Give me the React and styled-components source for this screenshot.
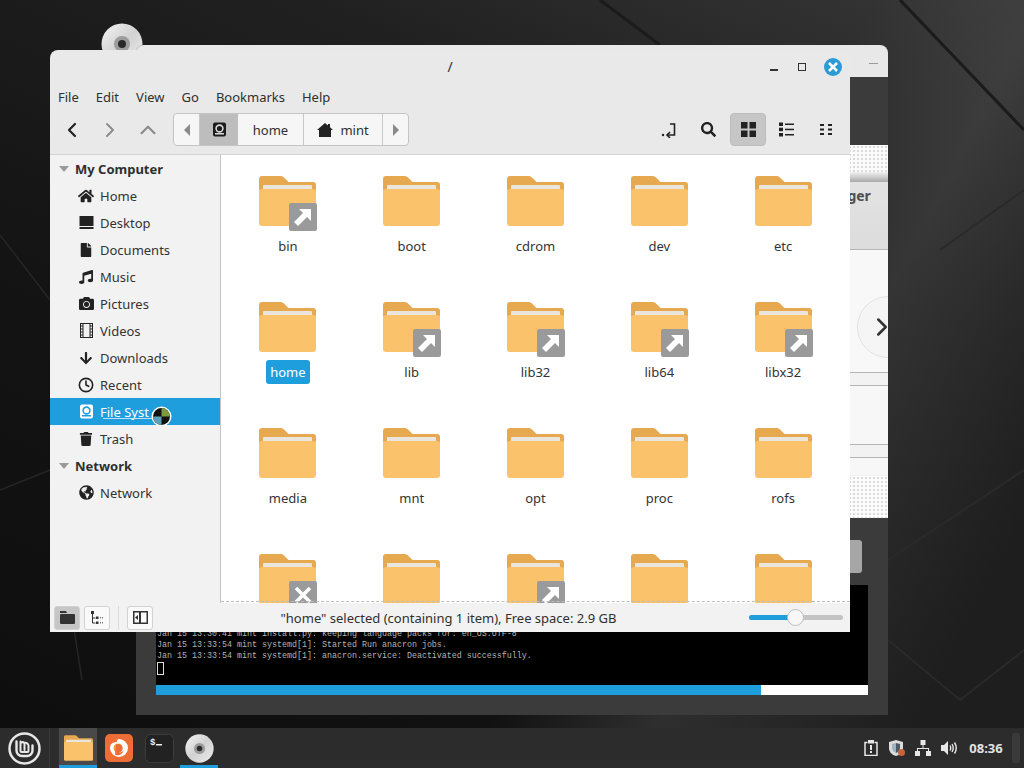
import React from "react";
import styled, { createGlobalStyle } from "styled-components";
import {
  FaHome,
  FaMusic,
  FaCamera,
  FaTrash,
  FaGlobeAmericas,
  FaFile,
  FaArrowDown,
  FaSearch,
} from "react-icons/fa";
import { FiChevronLeft, FiChevronRight, FiChevronUp, FiClock } from "react-icons/fi";

const GlobalStyle = createGlobalStyle`
  html, body { margin: 0; padding: 0; background: #141414; }
  body { font-family: "Noto Sans", "Open Sans", sans-serif; overflow: hidden; }
  * { box-sizing: border-box; }
`;

const Screen = styled.div`
  width: 1024px;
  height: 768px;
  display: flex;
  flex-direction: column;
  overflow: hidden;
`;

const Desktop = styled.div`
  position: relative;
  flex: 1;
  overflow: hidden;
  background:
    linear-gradient(118deg, transparent 62%, rgba(70, 70, 70, 0.55) 74%, #1e1e1e 92%),
    linear-gradient(205deg, #383838 0%, #202020 28%, #141414 60%, #0e0e0e 100%);
`;

const Wallpaper = styled.svg`
  position: absolute;
  inset: 0;
`;

const DesktopDisc = styled.div`
  position: absolute;
  left: 101px;
  top: 23px;
`;

/* window at the back */
const BackWindow = styled.div`
  position: absolute;
  left: 136px;
  top: 45px;
  width: 752px;
  height: 670px;
  display: flex;
  flex-direction: column;
  background: #3b3b3b;
  border-radius: 8px 8px 0 0;
  overflow: hidden;
`;

const BackTitle = styled.div`
  height: 32px;
  flex: none;
  display: flex;
  justify-content: flex-end;
  background: #e8e8e8;
  padding: 18px 10px 0 0;
`;

const BackMin = styled.div`
  width: 9px;
  height: 1px;
  background: #9a9a9a;
`;

const BackGap = styled.div`
  height: ${(p) => p.$h}px;
  flex: none;
`;

const Dotted = styled.div`
  height: ${(p) => p.$h}px;
  flex: none;
  background-color: ${(p) => p.$bg || "#fbfbfb"};
  background-image: radial-gradient(#d8d8d8 0.7px, transparent 0.8px);
  background-size: 4px 4px;
`;

const FadeStrip = styled.div`
  height: 10px;
  flex: none;
  background: linear-gradient(#f2f2f2, #a9a9a9);
`;

const HeadingStrip = styled.div`
  height: 68px;
  flex: none;
  display: flex;
  align-items: flex-start;
  padding: 4px 0 0 606px;
  overflow: hidden;
  white-space: nowrap;
  font-size: 14px;
  font-weight: 700;
  color: #4f4f4f;
  background: linear-gradient(#e3e3e3, #dcdcdc);
  border-bottom: 1px solid #b5b5b5;
`;

const PagerStrip = styled.div`
  position: relative;
  height: 123px;
  flex: none;
  background: #f8f8f8;
  border-bottom: 1px solid #b5b5b5;
`;

const PagerButton = styled.div`
  position: absolute;
  left: 721px;
  top: 46px;
  width: 62px;
  height: 62px;
  border-radius: 50%;
  background: #f5f5f5;
  border: 1px solid #e2e2e2;
  display: flex;
  align-items: center;
  padding-left: 9px;
  color: #333;
`;

const ListRow = styled.div`
  height: ${(p) => p.$h}px;
  flex: none;
  background: ${(p) => p.$bg || "#f7f7f7"};
  border-bottom: 1px solid ${(p) => p.$line || "#b5b5b5"};
`;

const BackLower = styled.div`
  flex: 1;
  display: flex;
  flex-direction: column;
  padding: 22px 20px 20px;
`;

const BackButtonRow = styled.div`
  height: 33px;
  display: flex;
  justify-content: flex-end;
  padding-right: 6px;
  margin-bottom: 12px;
`;

const BackButton = styled.div`
  width: 12px;
  background: #a6a6a6;
  border-radius: 0 3px 3px 0;
  margin-left: auto;
`;

const Terminal = styled.div`
  height: 100px;
  display: flex;
  flex-direction: column;
  justify-content: flex-end;
  padding: 0 0 10px 1px;
  background: #000;
  color: #b4b4b4;
  font-family: "Liberation Mono", monospace;
  font-size: 8.33px;
  line-height: 11px;
  white-space: pre;
`;

const TermCursor = styled.div`
  width: 7px;
  height: 13px;
  border: 1px solid #ddd;
`;

const Progress = styled.div`
  height: 10px;
  background: #fff;
`;

const ProgressFill = styled.div`
  height: 100%;
  background: #1f9ede;
`;

/* file manager */
const Nemo = styled.div`
  position: absolute;
  left: 50px;
  top: 50px;
  width: 800px;
  height: 582px;
  display: flex;
  flex-direction: column;
  background: #e9e9e9;
  border-radius: 8px 8px 0 0;
  overflow: hidden;
  color: #2f2f2f;
  font-size: 13px;
`;

const TitleBar = styled.div`
  height: 33px;
  flex: none;
  display: grid;
  grid-template-columns: 1fr auto 1fr;
  align-items: center;
  font-size: 14px;
`;

const TitleControls = styled.div`
  justify-self: end;
  display: flex;
  align-items: center;
  padding-right: 8px;
`;

const MinButton = styled.div`
  width: 8px;
  height: 2px;
  background: #333;
  margin: 6px 20px 0 0;
`;

const MaxButton = styled.div`
  width: 8px;
  height: 8px;
  border: 1.5px solid #333;
  margin-right: 18px;
`;

const CloseButton = styled.div`
  width: 18px;
  height: 18px;
  border-radius: 50%;
  background: #2b9bd6;
  display: flex;
  align-items: center;
  justify-content: center;
`;

const MenuBar = styled.div`
  height: 27px;
  flex: none;
  display: flex;
  align-items: center;
  gap: 17px;
  padding-left: 8px;
`;

const Toolbar = styled.div`
  height: 44px;
  flex: none;
  display: flex;
  align-items: center;
  padding: 0 6px 5px 0;
  border-bottom: 0;
`;

const NavButton = styled.div`
  width: 38px;
  height: 33px;
  display: flex;
  align-items: center;
  justify-content: center;
  color: ${(p) => (p.$dim ? "#8c8c8c" : "#222")};
`;

const NavGroup = styled.div`
  display: flex;
  padding-left: 3px;
  margin-right: 6px;
`;

const PathBar = styled.div`
  display: flex;
  height: 33px;
  background: #f6f6f6;
  border: 1px solid #c4c4c4;
  border-radius: 4px;
  overflow: hidden;
`;

const PathSegment = styled.div`
  width: ${(p) => p.$w}px;
  display: flex;
  align-items: center;
  justify-content: center;
  gap: 7px;
  background: ${(p) => (p.$active ? "#bdbdbd" : "transparent")};
  border-right: ${(p) => (p.$line ? "1px solid #c9c9c9" : "0")};
`;

const ToolIcons = styled.div`
  margin-left: auto;
  display: flex;
  align-items: center;
`;

const ToolButton = styled.div`
  width: ${(p) => p.$w || 36}px;
  height: 33px;
  display: flex;
  align-items: center;
  justify-content: center;
  border-radius: 4px;
  background: ${(p) => (p.$active ? "#c6c6c6" : "transparent")};
  border: ${(p) => (p.$active ? "1px solid #bcbcbc" : "0")};
  margin-left: ${(p) => p.$ml || 0}px;
`;

const Body = styled.div`
  flex: 1;
  min-height: 0;
  display: flex;
  border-top: 1px solid #d3d3d3;
`;

const Sidebar = styled.div`
  width: 171px;
  flex: none;
  background: #f2f2f2;
  border-right: 1px solid #c4c4c4;
  padding-top: 0;
`;

const SectionRow = styled.div`
  height: 27px;
  display: flex;
  align-items: center;
  padding-left: 9px;
  font-weight: 700;
  gap: 6px;
`;

const Triangle = styled.div`
  width: 0;
  height: 0;
  border-left: 5.5px solid transparent;
  border-right: 5.5px solid transparent;
  border-top: 6px solid #9a9a9a;
`;

const SideRow = styled.div`
  position: relative;
  height: 27px;
  display: flex;
  align-items: center;
  padding-left: 28px;
  background: ${(p) => (p.$active ? "#1f9ede" : "transparent")};
  color: ${(p) => (p.$active ? "#fff" : "#333")};
`;

const SideIcon = styled.span`
  width: 16px;
  height: 16px;
  margin-right: 6px;
  display: flex;
  align-items: center;
  justify-content: center;
  color: ${(p) => (p.$active ? "#fff" : "#222")};
`;

const SideUnderline = styled.div`
  position: absolute;
  left: 53px;
  top: 20px;
  width: 50px;
  height: 1px;
  background: #bfe2f5;
`;

const BusyCursor = styled.div`
  position: absolute;
  left: 101px;
  top: 8px;
  width: 21px;
  height: 21px;
`;

const Files = styled.div`
  position: relative;
  flex: 1;
  min-width: 0;
  overflow: hidden;
  background: #fff;
  display: grid;
  grid-template-columns: repeat(5, 123.8px);
  grid-auto-rows: 126px;
  padding: 21px 0 0 5px;
`;

const FileCell = styled.div`
  display: flex;
  flex-direction: column;
  align-items: center;
`;

const FolderWrap = styled.div`
  position: relative;
  width: 57px;
  height: 50px;
  flex: none;
`;

const Emblem = styled.div`
  position: absolute;
  left: 30px;
  top: 27px;
  width: 28px;
  height: 28px;
  border-radius: 2px;
  background: #9a9a9a;
  display: flex;
  align-items: center;
  justify-content: center;
`;

const FileLabel = styled.div`
  margin-top: 8px;
  height: 24px;
  padding: 0 4px;
  display: flex;
  align-items: center;
  border-radius: 3px;
  background: ${(p) => (p.$selected ? "#1f9ede" : "transparent")};
  color: ${(p) => (p.$selected ? "#fff" : "#333")};
`;

const DashLine = styled.div`
  position: absolute;
  left: 0;
  right: 0;
  bottom: 1px;
  border-top: 1px dashed #bdbdbd;
`;

const StatusBar = styled.div`
  height: 29px;
  flex: none;
  display: grid;
  grid-template-columns: 1fr auto 1fr;
  align-items: center;
  padding: 0 7px 0 4px;
  background: #f2f2f2;
`;

const StatusLeft = styled.div`
  display: flex;
  align-items: center;
  gap: 4px;
`;

const StatusButton = styled.div`
  width: 26px;
  height: 24px;
  display: flex;
  align-items: center;
  justify-content: center;
  border: 1px solid #d2d2d2;
  border-radius: 3px;
  background: ${(p) => (p.$active ? "#c6c6c6" : "#fafafa")};
`;

const StatusSep = styled.div`
  width: 1px;
  height: 24px;
  background: #dcdcdc;
  margin: 0 4px;
`;

const StatusText = styled.div`
  font-size: 13px;
`;

const Slider = styled.div`
  position: relative;
  justify-self: end;
  width: 94px;
  height: 5px;
  border-radius: 3px;
  background: #c4c4c4;
`;

const SliderFill = styled.div`
  height: 100%;
  border-radius: 3px 0 0 3px;
  background: #1f9ede;
`;

const SliderThumb = styled.div`
  position: absolute;
  left: 38px;
  top: -6px;
  width: 17px;
  height: 17px;
  border-radius: 50%;
  background: #f7f7f7;
  border: 1px solid #bdbdbd;
`;

/* bottom panel */
const Panel = styled.div`
  height: 40px;
  flex: none;
  display: flex;
  align-items: stretch;
  background: #2c2c2c;
  color: #e4e4e4;
`;

const MenuLogo = styled.div`
  width: 50px;
  display: flex;
  align-items: center;
  justify-content: center;
  padding-left: 0;
  border-right: 1px solid #3a3a3a;
`;

const Launchers = styled.div`
  display: flex;
  margin-left: 9px;
`;

const Launcher = styled.div`
  width: 38px;
  margin-right: ${(p) => p.$mr || 2}px;
  display: flex;
  align-items: center;
  justify-content: center;
  background: ${(p) => (p.$open ? "#494949" : "transparent")};
  box-shadow: ${(p) => (p.$running ? "inset 0 -3px 0 #1f9ede" : "none")};
`;

const Tray = styled.div`
  margin-left: auto;
  display: flex;
  align-items: center;
  padding-right: 4px;
`;

const TrayIcon = styled.div`
  width: 26px;
  display: flex;
  justify-content: center;
`;

const Clock = styled.div`
  width: 48px;
  text-align: center;
  font-size: 13px;
  font-weight: 700;
  color: #e2e2e2;
`;

const TrayEnd = styled.div`
  width: 8px;
  height: 30px;
  margin-left: 2px;
  border-radius: 2px;
  background: #3a3a3a;
`;

const Disc = ({ size }) => (
  <svg width={size} height={size} viewBox="0 0 42 42">
    <defs>
      <linearGradient id="discShade" x1="0" y1="0" x2="1" y2="1">
        <stop offset="0" stopColor="#f4f4f4" />
        <stop offset="0.5" stopColor="#d2d2d2" />
        <stop offset="1" stopColor="#ececec" />
      </linearGradient>
    </defs>
    <circle cx="21" cy="21" r="20.5" fill="url(#discShade)" />
    <circle cx="21" cy="21" r="8" fill="#9c9c9c" />
    <circle cx="21" cy="21" r="4" fill="#2a2a2a" />
  </svg>
);

const Folder = ({ small }) => (
  <svg width={small ? 29 : 57} height={small ? 26 : 50} viewBox="0 0 57 50">
    <path d="M3 0h18c2 0 3 .6 4.500 2l4 4H54a3 3 0 0 1 3 3v12H0V3a3 3 0 0 1 3-3z" fill="#e6a94f" />
    <rect x="4" y="9" width="49" height="10" rx="1" fill="#ebe6dd" />
    <path d="M0 14l3-1h51l3 1v33a3 3 0 0 1-3 3H3a3 3 0 0 1-3-3z" fill="#fbc26c" />
  </svg>
);

const LinkEmblem = () => (
  <svg width="20" height="20" viewBox="0 0 20 20">
    <path d="M6 2h12v12l-4-4-9 9-4-4 9-9z" fill="#fff" />
  </svg>
);

const BrokenEmblem = () => (
  <svg width="18" height="18" viewBox="0 0 18 18">
    <path d="M2 2l14 14M16 2L2 16" stroke="#fff" strokeWidth="3.500" />
  </svg>
);

const DriveIcon = ({ color = "#1c1c1c", size = 15 }) => (
  <svg width={size} height={size} viewBox="0 0 15 15">
    <rect x="1" y="0.500" width="13" height="14" rx="2" fill={color} />
    <rect x="3" y="2.500" width="9" height="10" rx="1" fill="none" stroke={color === "#fff" ? "#1f9ede" : "#e0e0e0"} strokeWidth="0" />
    <circle cx="7.500" cy="6.500" r="3.400" fill="none" stroke={color === "#fff" ? "#1f9ede" : "#d8d8d8"} strokeWidth="1.600" />
    <rect x="3" y="11" width="9" height="1.500" fill={color === "#fff" ? "#1f9ede" : "#d8d8d8"} />
  </svg>
);

const DesktopIcon = () => (
  <svg width="15" height="13" viewBox="0 0 15 13">
    <rect x="0.500" y="0" width="14" height="10" fill="#222" />
    <rect x="0.500" y="11" width="14" height="2" fill="#222" />
  </svg>
);

const VideoIcon = () => (
  <svg width="13" height="15" viewBox="0 0 13 15">
    <rect x="0.500" y="0.500" width="12" height="14" fill="none" stroke="#222" />
    <path d="M3 1v13M10 1v13" stroke="#222" />
    <path d="M0 3h3M0 6h3M0 9h3M0 12h3M10 3h3M10 6h3M10 9h3M10 12h3" stroke="#222" />
  </svg>
);

const PathHome = () => (
  <svg width="16" height="14" viewBox="0 0 16 14">
    <path d="M8 0l3 2.500V1h2v3.200L16 7h-2v7H2V7H0z" fill="#222" />
  </svg>
);

const SideArrow = ({ dir }) => (
  <svg width="8" height="12" viewBox="0 0 8 12">
    <path d={dir === "left" ? "M7 0v12L1 6z" : "M1 0v12l6-6z"} fill="#8a8a8a" />
  </svg>
);

const JumpIcon = () => (
  <svg width="16" height="16" viewBox="0 0 16 16" fill="none" stroke="#222" strokeWidth="1.600">
    <circle cx="2" cy="13" r="1.200" fill="#222" stroke="none" />
    <path d="M9 2h4.500v11H7" />
    <path d="M9 10l-3 3 3 3" />
  </svg>
);

const GridIcon = () => (
  <svg width="15" height="15" viewBox="0 0 15 15" fill="#222">
    <rect width="6.500" height="6.500" />
    <rect x="8.500" width="6.500" height="6.500" />
    <rect y="8.500" width="6.500" height="6.500" />
    <rect x="8.500" y="8.500" width="6.500" height="6.500" />
  </svg>
);

const ListIcon = () => (
  <svg width="15" height="15" viewBox="0 0 15 15" fill="#222">
    <rect y="0.500" width="4" height="3.500" />
    <rect y="5.700" width="4" height="3.500" />
    <rect y="11" width="4" height="3.500" />
    <rect x="6" y="1.500" width="9" height="1.500" />
    <rect x="6" y="6.700" width="9" height="1.500" />
    <rect x="6" y="12" width="9" height="1.500" />
  </svg>
);

const CompactIcon = () => (
  <svg width="13" height="11" viewBox="0 0 13 11" fill="#222">
    <rect y="0" width="4" height="2" />
    <rect x="8" y="0" width="4" height="2" />
    <rect y="4.500" width="4" height="2" />
    <rect x="8" y="4.500" width="4" height="2" />
    <rect y="9" width="4" height="2" />
    <rect x="8" y="9" width="4" height="2" />
  </svg>
);

const CloseGlyph = () => (
  <svg width="10" height="10" viewBox="0 0 10 10">
    <path d="M1 1l8 8M9 1L1 9" stroke="#fff" strokeWidth="2.500" />
  </svg>
);

const BusyGlyph = () => (
  <svg width="21" height="21" viewBox="0 0 21 21">
    <circle cx="10.500" cy="10.500" r="10" fill="#fff" />
    <circle cx="10.500" cy="10.500" r="8.500" fill="#111" />
    <path d="M10.500 10.500V2a8.500 8.500 0 0 1 8.500 8.500z" fill="#7d9a3c" />
    <path d="M10.500 10.500H2a8.500 8.500 0 0 0 8.500 8.500z" fill="#5e9fb8" />
  </svg>
);

const StatusPlaces = () => (
  <svg width="15" height="13" viewBox="0 0 15 13" fill="#333">
    <path d="M0 0h6l1 2H0z" />
    <rect y="3" width="15" height="10" rx="1" />
  </svg>
);

const StatusTree = () => (
  <svg width="14" height="14" viewBox="0 0 14 14" fill="none" stroke="#333">
    <path d="M2.500 3v9h3M2.500 7h3" />
    <rect x="1" y="0" width="3" height="3" fill="#333" stroke="none" />
    <rect x="6" y="5.500" width="2.500" height="2.500" fill="#333" stroke="none" />
    <rect x="6" y="10.500" width="2.500" height="2.500" fill="#333" stroke="none" />
    <path d="M10 6.800h3M10 11.800h3" strokeDasharray="1 1" />
  </svg>
);

const StatusHide = () => (
  <svg width="15" height="13" viewBox="0 0 15 13">
    <rect x="0.750" y="0.750" width="13.500" height="11.500" fill="none" stroke="#333" strokeWidth="1.500" />
    <rect x="6" y="1" width="2" height="11" fill="#333" />
    <path d="M5 4v5L2 6.500z" fill="#333" />
  </svg>
);

const MintLogo = () => (
  <svg width="33" height="33" viewBox="0 0 33 33" fill="none" stroke="#e8e8e8" strokeLinecap="round">
    <circle cx="16.500" cy="16.500" r="15" strokeWidth="2.500" />
    <path d="M8.500 9.500v9a5.500 5.500 0 0 0 5.500 5.500h5a5.500 5.500 0 0 0 5.500-5.500v-5" strokeWidth="2.400" />
    <path d="M12.500 9.500v9.500a1 1 0 0 0 1 1h6a1 1 0 0 0 1-1v-5.500a3 3 0 0 0-4-2.500 3 3 0 0 0-4 0M16.500 11v7" strokeWidth="2" />
  </svg>
);

const FirefoxIcon = () => (
  <svg width="28" height="28" viewBox="0 0 28 28">
    <rect width="28" height="28" rx="5" fill="#ee6c35" />
    <circle cx="14" cy="14" r="9" fill="#fff" />
    <circle cx="13" cy="14" r="4.500" fill="#f6a23c" />
    <path d="M5 11c2-4 5-6 8-6-1 1-1 2-1 3-3 0-5 1-7 3z" fill="#ee6c35" />
    <path d="M11 10.500c3-1.500 6 0 6.500 3 .4 2.500-1 4.500-3.500 5 2 .5 4-1 5-3-1 5-6 7-9 5" fill="#ee6c35" />
  </svg>
);

const TerminalIcon = () => (
  <svg width="29" height="29" viewBox="0 0 29 29">
    <rect x="0.500" y="0.500" width="28" height="28" rx="5" fill="#222" stroke="#3d3d3d" />
    <text x="5" y="11" fontFamily="Liberation Mono, monospace" fontSize="9" fontWeight="700" fill="#eee">$</text>
    <rect x="11" y="10" width="6" height="1.500" fill="#eee" />
  </svg>
);

const ClipboardIcon = () => (
  <svg width="14" height="16" viewBox="0 0 14 16" fill="none" stroke="#e8e8e8">
    <path d="M3.500 2.500H1v13h12v-13h-2.500" strokeWidth="1.500" />
    <rect x="4" y="0" width="6" height="3.500" fill="#e8e8e8" stroke="none" />
    <rect x="6" y="5" width="2" height="5" fill="#e8e8e8" stroke="none" />
    <rect x="6" y="11" width="2" height="2" fill="#e8e8e8" stroke="none" />
  </svg>
);

const ShieldIcon = () => (
  <svg width="18" height="18" viewBox="0 0 18 18">
    <path d="M8 1l7 2v6c0 4-3 7-7 8-4-1-7-4-7-8V3z" fill="#dcdcdc" />
    <path d="M8 4l4 1v4c0 2.500-2 4-4 5z" fill="#4c5a66" />
    <path d="M8 4L4 5v4c0 2.500 2 4 4 5z" fill="#9fb4c0" />
    <circle cx="13.500" cy="13.500" r="3.500" fill="#c8643c" />
  </svg>
);

const NetworkIcon = () => (
  <svg width="16" height="16" viewBox="0 0 16 16" fill="#e8e8e8">
    <rect x="5.500" y="0" width="5" height="5" />
    <rect x="0" y="11" width="5" height="5" />
    <rect x="11" y="11" width="5" height="5" />
    <path d="M7.500 5h1v3h5.500v3h-1V9H3v2H2V8h5.500z" />
  </svg>
);

const VolumeIcon = () => (
  <svg width="17" height="14" viewBox="0 0 17 14" fill="none" stroke="#e8e8e8">
    <path d="M0 4h3l4-4v14l-4-4H0z" fill="#e8e8e8" stroke="none" />
    <path d="M9 4.500q1.500 2.500 0 5M11 3q2.500 4 0 8M13.500 1.500q3.500 5.500 0 11" strokeWidth="1.400" />
  </svg>
);

const sideItems = [
  { label: "Home", icon: <FaHome size={16} /> },
  { label: "Desktop", icon: <DesktopIcon /> },
  { label: "Documents", icon: <FaFile size={14} /> },
  { label: "Music", icon: <FaMusic size={14} /> },
  { label: "Pictures", icon: <FaCamera size={15} /> },
  { label: "Videos", icon: <VideoIcon /> },
  { label: "Downloads", icon: <FaArrowDown size={14} /> },
  { label: "Recent", icon: <FiClock size={16} strokeWidth={2.4} /> },
];

const files = [
  { name: "bin", emblem: "link" },
  { name: "boot" },
  { name: "cdrom" },
  { name: "dev" },
  { name: "etc" },
  { name: "home", selected: true },
  { name: "lib", emblem: "link" },
  { name: "lib32", emblem: "link" },
  { name: "lib64", emblem: "link" },
  { name: "libx32", emblem: "link" },
  { name: "media" },
  { name: "mnt" },
  { name: "opt" },
  { name: "proc" },
  { name: "rofs" },
  { name: "root", emblem: "broken" },
  { name: "run" },
  { name: "sbin", emblem: "link" },
  { name: "snap" },
  { name: "srv" },
];

const logLines = [
  "Jan 15 13:30:41 mint install.py: keeping language packs for: en_US.UTF-8",
  "Jan 15 13:33:54 mint systemd[1]: Started Run anacron jobs.",
  "Jan 15 13:33:54 mint systemd[1]: anacron.service: Deactivated successfully.",
];

export default function App() {
  return (
    <Screen>
      <GlobalStyle />
      <Desktop>
        <Wallpaper width="1024" height="728" viewBox="0 0 1024 728" fill="none">
          <path d="M0 235L50 300M0 490L50 470M60 540L82 680" stroke="#262626" strokeWidth="1.500" />
          <path d="M888 560L1024 470M888 640L960 700L1024 650M940 250L1024 190" stroke="#2a2a2a" strokeWidth="2" />
          <path d="M900 0L1024 130M600 0L660 45" stroke="#1b1b1b" strokeWidth="3" />
        </Wallpaper>
        <DesktopDisc>
          <Disc size={42} />
        </DesktopDisc>

        <BackWindow>
          <BackTitle>
            <BackMin />
          </BackTitle>
          <BackGap $h={68} />
          <Dotted $h={27} />
          <FadeStrip />
          <HeadingStrip>Software Manager</HeadingStrip>
          <PagerStrip>
            <PagerButton>
              <FiChevronRight size={30} strokeWidth={2} />
            </PagerButton>
          </PagerStrip>
          <ListRow $h={13} $bg="#f2f2f2" />
          <ListRow $h={59} />
          <ListRow $h={13} $bg="#f2f2f2" />
          <ListRow $h={18} $line="#f2f2f2" />
          <Dotted $h={42} />
          <BackLower>
            <BackButtonRow>
              <BackButton />
            </BackButtonRow>
            <Terminal>
              {logLines.map((line) => (
                <div key={line}>{line}</div>
              ))}
              <TermCursor />
            </Terminal>
            <Progress>
              <ProgressFill style={{ width: "85%" }} />
            </Progress>
          </BackLower>
        </BackWindow>

        <Nemo>
          <TitleBar>
            <span />
            <span>/</span>
            <TitleControls>
              <MinButton />
              <MaxButton />
              <CloseButton>
                <CloseGlyph />
              </CloseButton>
            </TitleControls>
          </TitleBar>
          <MenuBar>
            <span>File</span>
            <span>Edit</span>
            <span>View</span>
            <span>Go</span>
            <span>Bookmarks</span>
            <span>Help</span>
          </MenuBar>
          <Toolbar>
            <NavGroup>
              <NavButton>
                <FiChevronLeft size={24} strokeWidth={2.2} />
              </NavButton>
              <NavButton $dim>
                <FiChevronRight size={24} strokeWidth={2} />
              </NavButton>
              <NavButton $dim>
                <FiChevronUp size={26} strokeWidth={2} />
              </NavButton>
            </NavGroup>
            <PathBar>
              <PathSegment $w={26} $line>
                <SideArrow dir="left" />
              </PathSegment>
              <PathSegment $w={38} $active>
                <DriveIcon />
              </PathSegment>
              <PathSegment $w={66} $line>
                home
              </PathSegment>
              <PathSegment $w={79} $line>
                <PathHome />
                mint
              </PathSegment>
              <PathSegment $w={25}>
                <SideArrow dir="right" />
              </PathSegment>
            </PathBar>
            <ToolIcons>
              <ToolButton>
                <JumpIcon />
              </ToolButton>
              <ToolButton $ml={3}>
                <FaSearch size={15} color="#222" />
              </ToolButton>
              <ToolButton $active $ml={4}>
                <GridIcon />
              </ToolButton>
              <ToolButton $ml={2}>
                <ListIcon />
              </ToolButton>
              <ToolButton $ml={4}>
                <CompactIcon />
              </ToolButton>
            </ToolIcons>
          </Toolbar>
          <Body>
            <Sidebar>
              <SectionRow>
                <Triangle />
                My Computer
              </SectionRow>
              {sideItems.map((item) => (
                <SideRow key={item.label}>
                  <SideIcon>{item.icon}</SideIcon>
                  {item.label}
                </SideRow>
              ))}
              <SideRow $active>
                <SideIcon $active>
                  <DriveIcon color="#fff" />
                </SideIcon>
                File Syst
                <SideUnderline />
                <BusyCursor>
                  <BusyGlyph />
                </BusyCursor>
              </SideRow>
              <SideRow>
                <SideIcon>
                  <FaTrash size={14} />
                </SideIcon>
                Trash
              </SideRow>
              <SectionRow>
                <Triangle />
                Network
              </SectionRow>
              <SideRow>
                <SideIcon>
                  <FaGlobeAmericas size={15} />
                </SideIcon>
                Network
              </SideRow>
            </Sidebar>
            <Files>
              {files.map((file) => (
                <FileCell key={file.name}>
                  <FolderWrap>
                    <Folder />
                    {file.emblem && (
                      <Emblem>{file.emblem === "link" ? <LinkEmblem /> : <BrokenEmblem />}</Emblem>
                    )}
                  </FolderWrap>
                  <FileLabel $selected={file.selected}>{file.name}</FileLabel>
                </FileCell>
              ))}
              <DashLine />
            </Files>
          </Body>
          <StatusBar>
            <StatusLeft>
              <StatusButton $active>
                <StatusPlaces />
              </StatusButton>
              <StatusButton>
                <StatusTree />
              </StatusButton>
              <StatusSep />
              <StatusButton>
                <StatusHide />
              </StatusButton>
            </StatusLeft>
            <StatusText>"home" selected (containing 1 item), Free space: 2.9 GB</StatusText>
            <Slider>
              <SliderFill style={{ width: "44%" }} />
              <SliderThumb />
            </Slider>
          </StatusBar>
        </Nemo>
      </Desktop>

      <Panel>
        <MenuLogo>
          <MintLogo />
        </MenuLogo>
        <Launchers>
          <Launcher $open $running $mr={3}>
            <Folder small />
          </Launcher>
          <Launcher>
            <FirefoxIcon />
          </Launcher>
          <Launcher>
            <TerminalIcon />
          </Launcher>
          <Launcher $running>
            <Disc size={29} />
          </Launcher>
        </Launchers>
        <Tray>
          <TrayIcon>
            <ClipboardIcon />
          </TrayIcon>
          <TrayIcon>
            <ShieldIcon />
          </TrayIcon>
          <TrayIcon>
            <NetworkIcon />
          </TrayIcon>
          <TrayIcon>
            <VolumeIcon />
          </TrayIcon>
          <Clock>08:36</Clock>
          <TrayEnd />
        </Tray>
      </Panel>
    </Screen>
  );
}
